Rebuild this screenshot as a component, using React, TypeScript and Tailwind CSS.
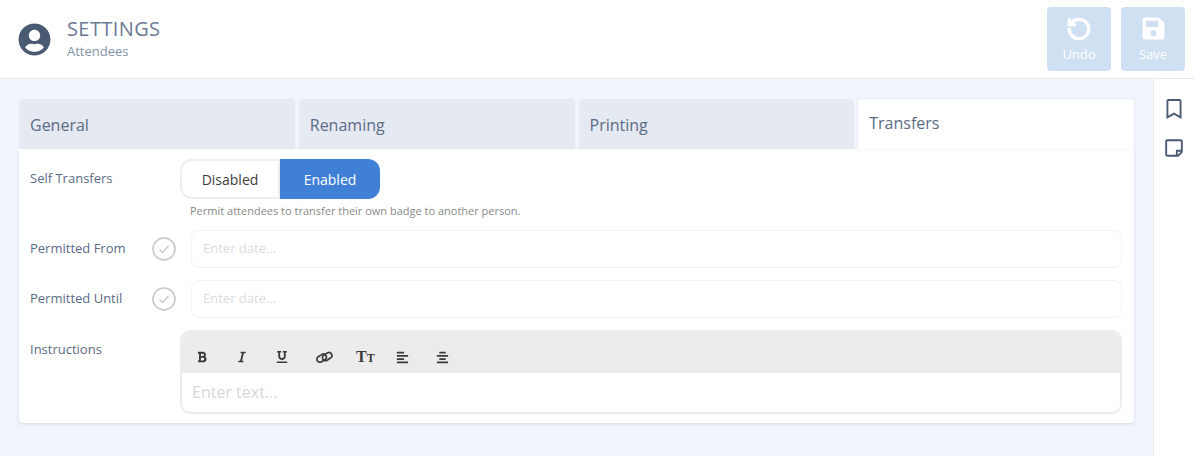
import React from "react";
import { FaUserCircle, FaSave, FaRegBookmark, FaRegStickyNote, FaBold, FaItalic, FaUnderline, FaAlignLeft, FaAlignCenter } from "react-icons/fa";
import { RotateCcw } from "lucide-react";

function Tab({ label, active }: { label: string; active?: boolean }) {
  if (active) {
    return (
      <div className="flex-1 h-[50px] bg-white rounded-t-[4px] shadow-[0_0_2px_rgba(0,0,0,0.12)] relative z-10 px-[11px] pt-[12px] text-[16px] leading-[24px] text-[#5b6b85]">
        {label}
      </div>
    );
  }
  return (
    <div className="flex-1 h-[50px] bg-[#e5e9f2] rounded-t-[4px] px-[11px] pt-[14px] text-[16px] leading-[24px] text-[#5b6b85]">
      {label}
    </div>
  );
}

function CheckCircle() {
  return (
    <svg width="24" height="24" viewBox="0 0 24 24" fill="none" stroke="#c8c8c8">
      <circle cx="12" cy="12" r="11" strokeWidth="1.6" />
      <path d="M7.5 12.5l3 3 6-6.5" strokeWidth="1.3" />
    </svg>
  );
}

function DateRow({ label }: { label: string }) {
  return (
    <div className="flex items-center h-[38px] mb-[12px]">
      <div className="w-[122px] text-[13px] text-[#5b6b85]">{label}</div>
      <div className="w-[39px] flex-none"><CheckCircle /></div>
      <div className="flex-1 h-[38px] border border-[#f3f3f3] rounded-[8px] px-[11px] flex items-center text-[13px] text-[#dcdcdc]">
        Enter date...
      </div>
    </div>
  );
}

function LinkIcon() {
  return (
    <svg width="17" height="17" viewBox="0 0 17 17" fill="none" stroke="#3a3a3a" strokeWidth="1.7">
      <rect x="0.6" y="6.2" width="10" height="6" rx="3" transform="rotate(-32 5.6 9.2)" />
      <rect x="6.2" y="4.6" width="10" height="6" rx="3" transform="rotate(-32 11.2 7.6)" />
    </svg>
  );
}

export default function App() {
  return (
    <div className="w-[1194px] h-[456px] overflow-hidden bg-[#f0f5fd] font-['Open_Sans',sans-serif] flex flex-col">
      {/* Header */}
      <div className="h-[79px] flex-none bg-white border-b border-[#e8e8e8] flex items-center pl-[18px] pr-[9px]">
        <FaUserCircle className="text-[#4a5a72] text-[33px] bg-white rounded-full" />
        <div className="ml-[16px] flex-1 -mt-[3px]">
          <div className="text-[20px] leading-[26px] tracking-[0.4px] text-[#6b7a94]">SETTINGS</div>
          <div className="text-[13px] leading-[18px] text-[#8493aa]">Attendees</div>
        </div>
        <div className="flex gap-[10px] -mt-[1px]">
          <div className="w-[64px] h-[64px] bg-[#d0e0f3] rounded-[4px] flex flex-col items-center pt-[9px] text-white">
            <RotateCcw size={26} strokeWidth={3} />
            <div className="text-[13px] leading-[18px] mt-[3px]">Undo</div>
          </div>
          <div className="w-[64px] h-[64px] bg-[#d0e0f3] rounded-[4px] flex flex-col items-center pt-[9px] text-white">
            <FaSave size={25} />
            <div className="text-[13px] leading-[18px] mt-[4px]">Save</div>
          </div>
        </div>
      </div>

      <div className="flex-1 flex min-h-0">
        {/* Content */}
        <div className="flex-1 pl-[19px] pr-[19px] pt-[20px]">
          <div className="flex gap-[4px]">
            <Tab label="General" />
            <Tab label="Renaming" />
            <Tab label="Printing" />
            <Tab label="Transfers" active />
          </div>
          <div className="h-[274px] bg-white shadow-[0_1px_3px_rgba(0,0,0,0.12)] pl-[11px] pr-[12px] pt-[10px] rounded-b-[4px]">
            {/* Self transfers */}
            <div className="flex items-start h-[40px]">
              <div className="w-[150px] text-[13px] leading-[38px] text-[#5b6b85] -mt-[0px]">Self Transfers</div>
              <div className="w-[200px] h-[40px] flex text-[14px]">
                <div className="w-[100px] bg-white border-2 border-[#eeeeee] rounded-l-[12px] flex items-center justify-center text-[#3d3d3d]">Disabled</div>
                <div className="w-[100px] bg-[#3f80d6] rounded-r-[12px] flex items-center justify-center text-white">Enabled</div>
              </div>
            </div>
            <div className="pl-[160px] mt-[3px] h-[28px] text-[11px] leading-[18px] text-[#8a8a8a]">
              Permit attendees to transfer their own badge to another person.
            </div>
            <DateRow label="Permitted From" />
            <DateRow label="Permitted Until" />
            {/* Instructions */}
            <div className="flex items-start">
              <div className="w-[150px] text-[13px] leading-[38px] text-[#5b6b85]">Instructions</div>
              <div className="flex-1 h-[84px] border-2 border-[#ececec] rounded-[10px] overflow-hidden">
                <div className="h-[41px] bg-[#ececec] flex items-center pl-[14px] gap-[0px] text-[#3a3a3a] pt-[9px]">
                  <div className="w-[40px]"><FaBold size={12} /></div>
                  <div className="w-[40px]"><FaItalic size={12} /></div>
                  <div className="w-[40px]"><FaUnderline size={12} /></div>
                  <div className="w-[40px]"><LinkIcon /></div>
                  <div className="w-[40px] font-['Liberation_Serif',serif] font-bold text-[16px] leading-[16px]">T<span className="text-[12px]">T</span></div>
                  <div className="w-[40px]"><FaAlignLeft size={13} /></div>
                  <div className="w-[40px]"><FaAlignCenter size={13} /></div>
                </div>
                <div className="pl-[10px] pt-[7px] text-[16px] leading-[24px] text-[#d8d8d8]">Enter text...</div>
              </div>
            </div>
          </div>
        </div>
        {/* Side rail */}
        <div className="w-[41px] flex-none bg-white border-l border-[#e8e8e8] flex flex-col items-center pt-[20px] gap-[19px] text-[#4a5a72]">
          <FaRegBookmark size={20} />
          <FaRegStickyNote size={20} />
        </div>
      </div>
    </div>
  );
}
